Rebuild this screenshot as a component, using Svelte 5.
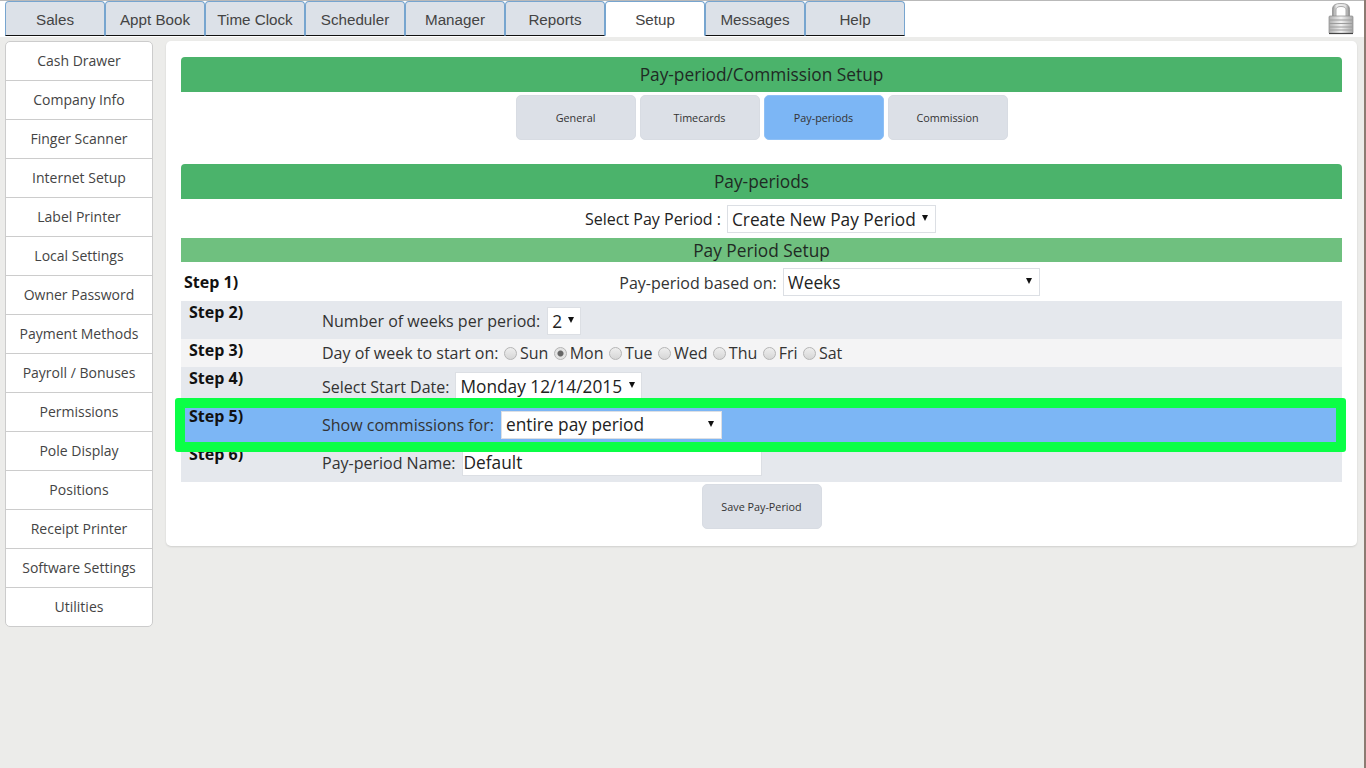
<script>
  const tabs = ['Sales', 'Appt Book', 'Time Clock', 'Scheduler', 'Manager', 'Reports', 'Setup', 'Messages', 'Help'];
  const side = ['Cash Drawer', 'Company Info', 'Finger Scanner', 'Internet Setup', 'Label Printer', 'Local Settings', 'Owner Password', 'Payment Methods', 'Payroll / Bonuses', 'Permissions', 'Pole Display', 'Positions', 'Receipt Printer', 'Software Settings', 'Utilities'];
  const subs = ['General', 'Timecards', 'Pay-periods', 'Commission'];
  const days = ['Sun', 'Mon', 'Tue', 'Wed', 'Thu', 'Fri', 'Sat'];
</script>

<div class="page">
  <header class="top">
    <nav class="tabs">
      {#each tabs as t}
        <button class="tab" class:on={t === 'Setup'}>{t}</button>
      {/each}
    </nav>
    <svg class="lock" width="26" height="32" viewBox="0 0 26 32" aria-label="Lock">
      <defs>
        <linearGradient id="sh" x1="0" x2="1" y1="0" y2="0">
          <stop offset="0" stop-color="#8d8d8d" /><stop offset=".25" stop-color="#f0f0f0" /><stop offset=".75" stop-color="#e4e4e4" /><stop offset="1" stop-color="#858585" />
        </linearGradient>
        <linearGradient id="bd" x1="0" x2="1" y1="0" y2="0">
          <stop offset="0" stop-color="#b0b0b0" /><stop offset=".5" stop-color="#f2f2f2" /><stop offset="1" stop-color="#a8a8a8" />
        </linearGradient>
      </defs>
      <path d="M4.500 14V6.500C4.500 2 7.500.5 13 .5s8.500 1.500 8.500 6V14h-3.500V6.800C18 4.500 16 3.500 13 3.500S8 4.500 8 6.800V14z" fill="url(#sh)" stroke="#8a8a8a" stroke-width=".7" />
      <rect x="1" y="13" width="24" height="17.500" rx="1" fill="url(#bd)" stroke="#8a8a8a" stroke-width=".7" />
      <path d="M1.500 17h23M1.500 20.500h23M1.500 24h23M1.500 27h23" stroke="#9c9c9c" stroke-width="1.200" />
      <path d="M1 30.500h24" stroke="#444" stroke-width="1.200" />
    </svg>
  </header>

  <div class="body">
    <aside class="side">
      {#each side as s}
        <a class="side-item" href="#top">{s}</a>
      {/each}
    </aside>

    <main class="panel">
      <h2 class="bar">Pay-period/Commission Setup</h2>
      <div class="subtabs">
        {#each subs as s}
          <button class="sub" class:on={s === 'Pay-periods'}>{s}</button>
        {/each}
      </div>

      <h2 class="bar second">Pay-periods</h2>
      <div class="pick">
        <span>Select Pay Period :</span>
        <span class="sel w-create"><select><option>Create New Pay Period</option></select></span>
      </div>
      <h3 class="subbar">Pay Period Setup</h3>

      <div class="form">
        <div class="row r1">
          <b class="step">Step 1)</b>
          <div class="ctl center">
            <span>Pay-period based on:</span>
            <span class="sel w-weeks"><select><option>Weeks</option></select></span>
          </div>
        </div>
        <div class="row r2">
          <b class="step">Step 2)</b>
          <div class="ctl">
            <span>Number of weeks per period:</span>
            <span class="sel w-two"><select><option>2</option></select></span>
          </div>
        </div>
        <div class="row r3">
          <b class="step">Step 3)</b>
          <div class="ctl">
            <span>Day of week to start on:</span>
            {#each days as d}
              <label class="day"><input type="radio" name="day" checked={d === 'Mon'} />{d}</label>
            {/each}
          </div>
        </div>
        <div class="row r4">
          <b class="step">Step 4)</b>
          <div class="ctl">
            <span>Select Start Date:</span>
            <span class="sel w-date"><select><option>Monday 12/14/2015</option></select></span>
          </div>
        </div>
        <div class="row r5">
          <b class="step">Step 5)</b>
          <div class="ctl">
            <span>Show commissions for:</span>
            <span class="sel w-comm"><select><option>entire pay period</option></select></span>
          </div>
        </div>
        <div class="row r6">
          <b class="step">Step 6)</b>
          <div class="ctl">
            <span>Pay-period Name:</span>
            <input class="name" type="text" value="Default" />
          </div>
        </div>
        <div class="highlight"></div>
      </div>

      <div class="save"><button class="sub">Save Pay-Period</button></div>
    </main>
  </div>
</div>

<style>
  :global(body) {
    margin: 0;
    background: #ececea;
  }
  .page {
    box-sizing: border-box;
    width: 1366px;
    height: 768px;
    overflow: hidden;
    background: #ececea;
    border-right: 2px solid #8c7b72;
    font-family: "Open Sans", sans-serif;
    color: #222;
  }
  .top {
    position: relative;
    box-sizing: border-box;
    height: 37px;
    background: #fff;
    border-top: 1px solid #b9b9b9;
    display: flex;
    justify-content: space-between;
    padding: 0 10px 0 5px;
  }
  .tabs { display: flex; }
  .tab {
    box-sizing: border-box;
    width: 100px;
    height: 35px;
    padding: 2px 0 0;
    background: #dce1e8;
    border: 1px solid #77a5cf;
    border-bottom: 1px solid #111;
    border-radius: 4px 4px 0 0;
    font: 15.200px "Liberation Sans", sans-serif;
    color: #444;
  }
  .tab.on { background: #fff; border-bottom-color: #fff; }
  .lock { margin-top: 2px; }
  .body {
    display: flex;
    align-items: flex-start;
    gap: 13px;
    padding: 4px 6px 0 5px;
  }
  .side {
    box-sizing: border-box;
    width: 148px;
    background: #fff;
    border: 1px solid #ccc;
    border-radius: 5px;
    display: flex;
    flex-direction: column;
    flex: none;
  }
  .side-item {
    height: 39px;
    box-sizing: border-box;
    border-bottom: 1px solid #ccc;
    display: flex;
    align-items: center;
    justify-content: center;
    padding-bottom: 1px;
    font-size: 14px;
    color: #444;
    text-decoration: none;
  }
  .side-item:last-child { border-bottom: 0; height: 38px; }
  .panel {
    box-sizing: border-box;
    width: 1191px;
    height: 505px;
    padding: 16px 15px 0;
    background: #fff;
    border-radius: 5px;
    box-shadow: 0 1px 2px rgba(0, 0, 0, .12);
  }
  h2, h3 { margin: 0; font-weight: 400; text-align: center; color: #1f2a24; }
  .bar {
    height: 35px;
    line-height: 36px;
    background: #4bb36b;
    border-radius: 4px 4px 0 0;
    font-size: 17.300px;
  }
  .second { margin-top: 24px; }
  .subtabs {
    display: flex;
    justify-content: center;
    gap: 4px;
    margin-top: 3px;
    height: 45px;
  }
  .sub {
    box-sizing: border-box;
    width: 120px;
    height: 45px;
    padding: 0;
    background: #dce0e7;
    border: 1px solid #d8dce3;
    border-radius: 5px;
    font: 10.800px "Open Sans", sans-serif;
    color: #333;
  }
  .sub.on { background: #7cb6f5; border-color: #8fc0f5; }
  .pick {
    height: 39px;
    display: flex;
    align-items: center;
    justify-content: center;
    gap: 6px;
    padding: 1px 2px 0 0;
    box-sizing: border-box;
    font-size: 16px;
  }
  .subbar {
    height: 24px;
    line-height: 26px;
    background: #6fc07f;
    font-size: 17.300px;
  }
  .form { position: relative; font-size: 16px; }
  .row {
    display: grid;
    grid-template-columns: 141px 1fr;
    box-sizing: border-box;
  }
  .step { padding: 1px 0 0 8px; font-size: 16px; font-weight: 700; color: #111; line-height: 20px; }
  .ctl { display: flex; align-items: center; gap: 4px; white-space: nowrap; color: #333; }
  .center { justify-content: center; gap: 6px; padding-right: 5px; }
  .r1 { height: 39px; }
  .r1 .step { padding: 10px 0 0 3px; }
  .r1 .ctl span:first-child { padding-top: 2px; }
  .r1 select { padding-top: 2px; }
  .r2 { height: 38px; background: #e5e8ed; }
  .r2 .ctl { padding-top: 2px; gap: 7px; }
  .r3 { height: 28px; background: #f4f4f5; }
  .r4 { height: 40px; background: #e5e8ed; }
  .r4 .ctl { gap: 6px; }
  .r4 .sel { margin-top: -2px; }
  .r5 { height: 35px; background: #7cb6f5; }
  .r5 .ctl { gap: 7px; }
  .r5 .step { padding-top: 0; margin-top: -1px; }
  .r6 { height: 40px; background: #e5e8ed; }
  .r6 .ctl { gap: 6px; padding-top: 1px; }
  .r6 .step { padding-top: 2px; }
  .sel { position: relative; display: inline-block; flex: none; }
  .sel::after {
    content: "";
    position: absolute;
    right: 7.500px;
    top: 50%;
    margin-top: -4px;
    border: 3.500px solid transparent;
    border-top: 6px solid #111;
    border-bottom: 0;
  }
  select {
    appearance: none;
    display: block;
    box-sizing: border-box;
    width: 100%;
    height: 28px;
    padding: 0 4px;
    background: #fff;
    border: 1px solid #dcdfe4;
    border-radius: 0;
    font: 17.300px "Open Sans", sans-serif;
    color: #222;
  }
  .w-create { width: 209px; }
  .w-weeks { width: 257px; }
  .w-two { width: 34px; }
  .w-date { width: 187px; }
  .w-comm { width: 221px; }
  .day { display: inline-flex; align-items: center; margin-left: 1.400px; }
  .day input {
    appearance: none;
    box-sizing: border-box;
    width: 13px;
    height: 13px;
    margin: 0 3px 0 0;
    border: 1px solid #b5b5b5;
    border-radius: 50%;
    background: linear-gradient(#eee, #d6d6d6);
  }
  .day input:checked { background: radial-gradient(circle, #666 0 2.500px, #e3e3e3 3.500px); }
  .name {
    box-sizing: border-box;
    width: 300px;
    height: 26px;
    padding: 0 1px;
    background: #fff;
    border: 1px solid #dcdfe4;
    font: 17.300px "Open Sans", sans-serif;
    color: #222;
  }
  .highlight {
    position: absolute;
    left: -6px;
    right: -4px;
    top: 136px;
    height: 54px;
    box-sizing: border-box;
    border: 10px solid #0aff46;
    border-radius: 3px;
    pointer-events: none;
  }
  .save { display: flex; justify-content: center; margin-top: 2px; }
</style>
